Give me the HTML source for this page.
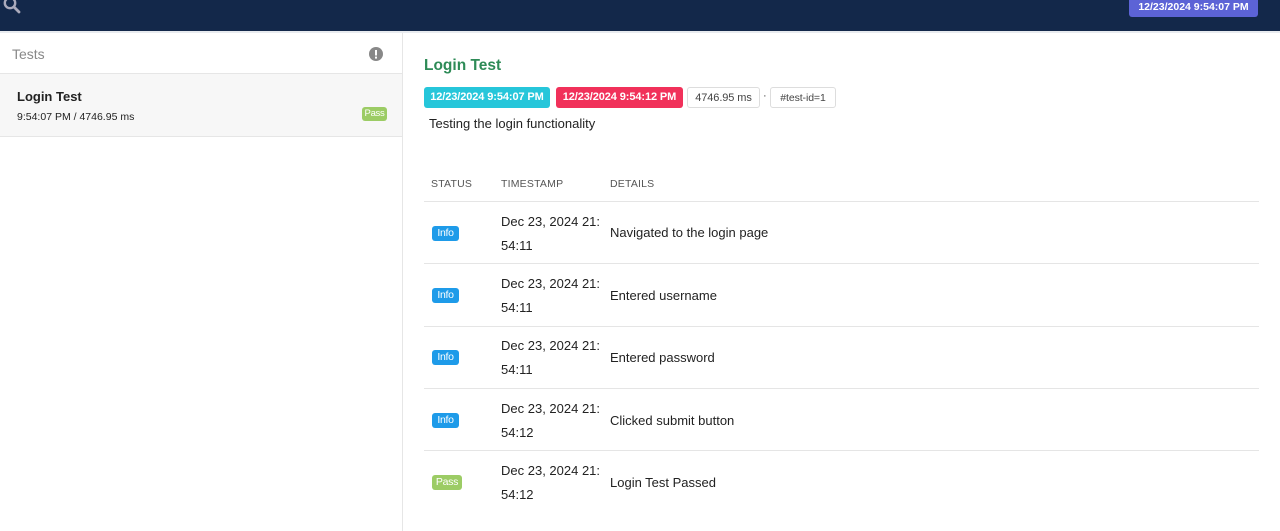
<!DOCTYPE html>
<html><head><meta charset="utf-8"><style>
*{box-sizing:border-box;margin:0;padding:0}
body{width:1280px;height:531px;overflow:hidden;background:#fff;font-family:"Segoe UI","Liberation Sans",sans-serif;color:#222;position:relative}
.a{position:absolute;white-space:nowrap}
.hdr{left:0;top:0;width:1280px;height:31px;background:#13284a}
.hline{left:0;top:31px;width:1280px;height:2px;background:#e8ebef}
.side{left:0;top:33px;width:403px;height:498px;border-right:1px solid #e6e6e6}
.badge{font-size:10.5px;color:#fff;border-radius:3px;line-height:15px;height:15px;text-align:center;letter-spacing:-.3px}
.tag{font-size:11px;border-radius:3px;line-height:20px;height:21px;text-align:center;letter-spacing:-.1px}
.sep{left:424px;width:835px;height:1px;background:#e5e5e5}
.ts{font-size:13px;line-height:24px;color:#222}
.det{font-size:13px;color:#222}
.th{font-size:10.5px;color:#555;letter-spacing:.2px}
</style></head><body>
<div class="a hdr"></div>
<svg class="a" style="left:3px;top:-4px" width="18" height="18" viewBox="0 0 18 18"><circle cx="7" cy="7" r="5.2" fill="none" stroke="#aab" stroke-width="2.4"/><line x1="11" y1="11" x2="16" y2="16" stroke="#aab" stroke-width="2.8" stroke-linecap="round"/></svg>
<div class="a" style="left:1129px;top:0;width:129px;height:17px;background:#5c63d6;border-radius:0 0 3px 3px;color:#fff;font-size:10.5px;font-weight:bold;line-height:14px;text-align:center">12/23/2024 9:54:07 PM</div>
<div class="a hline"></div>
<div class="a side"></div>
<div class="a" style="left:12px;top:46px;font-size:14px;color:#888">Tests</div>
<svg class="a" style="left:369px;top:47px" width="14" height="14" viewBox="0 0 14 14"><circle cx="7" cy="7" r="7" fill="#888"/><rect x="6" y="3" width="2" height="5.5" fill="#fff"/><rect x="6" y="9.6" width="2" height="2" fill="#fff"/></svg>
<div class="a" style="left:0;top:73px;width:402px;height:1px;background:#e6e6e6"></div>
<div class="a" style="left:0;top:74px;width:402px;height:63px;background:#f7f7f7;border-bottom:1px solid #e6e6e6"></div>
<div class="a" style="left:17px;top:89px;font-size:13px;font-weight:bold;color:#222">Login Test</div>
<div class="a" style="left:17px;top:111px;font-size:10.5px;color:#222">9:54:07 PM / 4746.95 ms</div>
<div class="a badge" style="left:362px;top:107px;width:25px;background:#9ccc65;font-size:9.5px;line-height:14px;height:14px">Pass</div>

<div class="a" style="left:424px;top:57px;font-size:15.5px;font-weight:bold;color:#2e8b57">Login Test</div>
<div class="a tag" style="left:424px;top:87px;width:126px;background:#26c6da;color:#fff;font-weight:bold">12/23/2024 9:54:07 PM</div>
<div class="a tag" style="left:556px;top:87px;width:127px;background:#f1315a;color:#fff;font-weight:bold">12/23/2024 9:54:12 PM</div>
<div class="a tag" style="left:687px;top:87px;width:73px;border:1px solid #ddd;color:#444">4746.95 ms</div>
<div class="a" style="left:763px;top:90px;font-size:11px;color:#444">·</div>
<div class="a tag" style="left:770px;top:87px;width:66px;border:1px solid #ddd;color:#444;font-size:10.5px">#test-id=1</div>
<div class="a" style="left:429px;top:116px;font-size:13px;color:#222">Testing the login functionality</div>

<div class="a th" style="left:431px;top:178px">STATUS</div>
<div class="a th" style="left:501px;top:178px">TIMESTAMP</div>
<div class="a th" style="left:610px;top:178px">DETAILS</div>

<div class="a sep" style="top:201px"></div>
<div class="a badge" style="left:432px;top:226px;width:27px;background:#1e9be9">Info</div>
<div class="a ts" style="left:501px;top:210px">Dec 23, 2024 21:<br>54:11</div>
<div class="a det" style="left:610px;top:225px">Navigated to the login page</div>

<div class="a sep" style="top:263px"></div>
<div class="a badge" style="left:432px;top:288px;width:27px;background:#1e9be9">Info</div>
<div class="a ts" style="left:501px;top:272px">Dec 23, 2024 21:<br>54:11</div>
<div class="a det" style="left:610px;top:288px">Entered username</div>

<div class="a sep" style="top:326px"></div>
<div class="a badge" style="left:432px;top:350px;width:27px;background:#1e9be9">Info</div>
<div class="a ts" style="left:501px;top:334px">Dec 23, 2024 21:<br>54:11</div>
<div class="a det" style="left:610px;top:350px">Entered password</div>

<div class="a sep" style="top:388px"></div>
<div class="a badge" style="left:432px;top:413px;width:27px;background:#1e9be9">Info</div>
<div class="a ts" style="left:501px;top:397px">Dec 23, 2024 21:<br>54:12</div>
<div class="a det" style="left:610px;top:413px">Clicked submit button</div>

<div class="a sep" style="top:450px"></div>
<div class="a badge" style="left:432px;top:475px;width:30px;background:#9ccc65">Pass</div>
<div class="a ts" style="left:501px;top:459px">Dec 23, 2024 21:<br>54:12</div>
<div class="a det" style="left:610px;top:475px">Login Test Passed</div>
</body></html>
